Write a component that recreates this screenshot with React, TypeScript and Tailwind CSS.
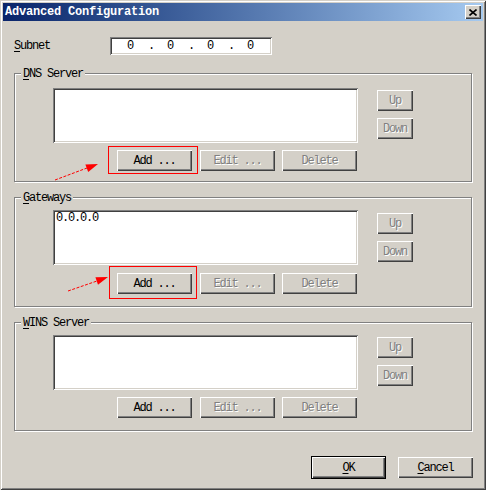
import { ReactNode } from "react";

const face = "font-['Liberation_Mono',monospace] text-[12px] tracking-[-1.2px] leading-[14px]";
const raised =
  "bg-[#d4d0c8] shadow-[inset_1px_1px_0_#fff,inset_-1px_-1px_0_#404040,inset_-2px_-2px_0_#808080]";
const sunken =
  "bg-white shadow-[inset_1px_1px_0_#808080,inset_-1px_-1px_0_#fff,inset_2px_2px_0_#404040,inset_-2px_-2px_0_#d4d0c8]";
const grayed = "text-[#808080] [text-shadow:1px_1px_0_#fff]";

function Key({ k, rest }: { k: string; rest: string }) {
  return (
    <span>
      <span className="underline underline-offset-[2px]">{k}</span>
      {rest}
    </span>
  );
}

function Btn({
  label,
  w = "w-[75px]",
  disabled,
}: {
  label: ReactNode;
  w?: string;
  disabled?: boolean;
}) {
  return (
    <div
      className={`${raised} ${w} h-[21px] flex items-center justify-center ${
        disabled ? grayed : "text-black"
      }`}
    >
      {label}
    </div>
  );
}

type GroupProps = {
  k: string;
  rest: string;
  pt: string;
  gap: string;
  pb: string;
  upPt: string;
  items?: string[];
};

function Group({ k, rest, pt, gap, pb, upPt, items = [] }: GroupProps) {
  return (
    <div className="relative w-[458px] border border-[#808080] shadow-[1px_1px_0_#fff,inset_1px_1px_0_#fff]">
      <div className="absolute left-[6px] top-[-7px] px-[2px] bg-[#d4d0c8] text-black">
        <Key k={k} rest={rest} />
      </div>
      <div className={`flex ${pt} ${pb}`}>
        <div className="pl-[38px]">
          <div className={`${sunken} w-[305px] h-[55px] pl-[3px] pt-[1px] text-black`}>
            {items.map((it) => (
              <div key={it}>{it}</div>
            ))}
          </div>
          <div className={`flex ${gap}`}>
            <div className="ml-[64px]">
              <Btn label="Add ..." />
            </div>
            <div className="ml-[8px]">
              <Btn label="Edit ..." disabled />
            </div>
            <div className="ml-[7px]">
              <Btn label="Delete" disabled />
            </div>
          </div>
        </div>
        <div className={`ml-[19px] flex flex-col gap-[7px] ${upPt}`}>
          <Btn label="Up" w="w-[36px]" disabled />
          <Btn label="Down" w="w-[36px]" disabled />
        </div>
      </div>
    </div>
  );
}

export default function App() {
  return (
    <div
      className={`${face} relative w-[486px] h-[490px] bg-[#d4d0c8] p-[3px] shadow-[inset_1px_1px_0_#d4d0c8,inset_-1px_-1px_0_#404040,inset_2px_2px_0_#fff,inset_-2px_-2px_0_#808080]`}
    >
      <div className="h-[18px] flex items-center justify-between bg-gradient-to-r from-[#0a246a] to-[#a6caf0] pl-[2px] pr-[2px]">
        <span className="text-white font-bold tracking-[-0.2px] leading-[18px]">
          Advanced Configuration
        </span>
        <div className={`${raised} w-[16px] h-[14px] flex items-center justify-center`}>
          <svg width="8" height="7" viewBox="0 0 8 7">
            <path d="M0.5 0.5 L7.5 6.5 M7.5 0.5 L0.5 6.5" stroke="#000" strokeWidth="1.6" />
          </svg>
        </div>
      </div>

      <div className="pl-[11px]">
        <div className="mt-[16px] flex items-center h-[18px]">
          <div className="w-[96px] text-black">
            <Key k="S" rest="ubnet" />
          </div>
          <div className={`${sunken} w-[162px] h-[18px] flex items-center pl-[17px] text-black`}>
            {[0, 1, 2, 3].map((i) => (
              <span key={i} className="flex">
                <span className="w-[6px]">0</span>
                {i < 3 && <span className="ml-[15px] mr-[13px] w-[6px]">.</span>}
              </span>
            ))}
          </div>
        </div>

        <div className="mt-[18px]">
          <Group k="D" rest="NS Server" pt="pt-[14px]" gap="mt-[7px]" pb="pb-[10px]" upPt="pt-[2px]" />
        </div>
        <div className="mt-[15px]">
          <Group
            k="G"
            rest="ateways"
            pt="pt-[12px]"
            gap="mt-[8px]"
            pb="pb-[12px]"
            upPt="pt-[3px]"
            items={["0.0.0.0"]}
          />
        </div>
        <div className="mt-[15px]">
          <Group k="W" rest="INS Server" pt="pt-[12px]" gap="mt-[7px]" pb="pb-[12px]" upPt="pt-[2px]" />
        </div>
      </div>

      <div className="mt-[25px] flex justify-end gap-[12px] pr-[10px]">
        <div className="border border-black">
          <Btn label={<Key k="O" rest="K" />} w="w-[73px]" />
        </div>
        <div className="py-[1px]">
          <Btn label={<Key k="C" rest="ancel" />} />
        </div>
      </div>

      <svg
        className="absolute inset-0 pointer-events-none"
        width="486"
        height="490"
        viewBox="0 0 486 490"
      >
        <rect x="108.5" y="146.5" width="89" height="27" fill="none" stroke="#ff0000" />
        <line x1="55" y1="180" x2="87" y2="168" stroke="#ff0000" strokeDasharray="3 1.5" />
        <polygon points="98,164 88.2,171.9 85.4,164.5" fill="#ff0000" />
        <rect x="109.5" y="266.5" width="87" height="32" fill="none" stroke="#ff0000" />
        <line x1="68" y1="291" x2="97" y2="281" stroke="#ff0000" strokeDasharray="3 1.5" />
        <polygon points="108,277 98,284.8 95.4,277.2" fill="#ff0000" />
      </svg>
    </div>
  );
}
